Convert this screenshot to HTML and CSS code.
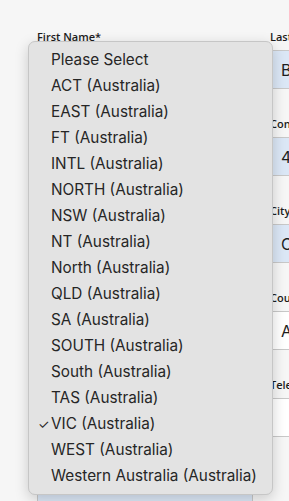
FILE: index.html
```html
<!DOCTYPE html>
<html lang="en">
<head>
    <meta charset="UTF-8">
    <meta name="viewport" content="width=device-width, initial-scale=1.0">
    <title>Contact Details</title>
    <link rel="stylesheet" href="styles.css">
</head>
<body>
    <form class="details-form">
        <div class="field">
            <label>First Name*</label>
            <div class="input filled">Ben</div>
        </div>
        <div class="field">
            <label>Last Name*</label>
            <div class="input filled">Bennett</div>
        </div>
        <div class="field">
            <label>Email*</label>
            <div class="input filled">ben@example.com</div>
        </div>
        <div class="field">
            <label>Contact Number*</label>
            <div class="input filled">412 345 678</div>
        </div>
        <div class="field">
            <label>Address*</label>
            <div class="input filled">1 Collins St</div>
        </div>
        <div class="field">
            <label>City*</label>
            <div class="input filled">Carlton</div>
        </div>
        <div class="field">
            <label>Postcode*</label>
            <div class="input filled">3053</div>
        </div>
        <div class="field">
            <label>Country*</label>
            <div class="input">Australia</div>
        </div>
        <div class="field">
            <label>Company</label>
            <div class="input"></div>
        </div>
        <div class="field">
            <label>Telephone</label>
            <div class="input"></div>
        </div>
        <div class="field state-field">
            <label>State*</label>
            <div class="input filled">VIC (Australia)</div>
        </div>
    </form>

    <ul class="select-menu">
        <li>Please Select</li>
        <li>ACT (Australia)</li>
        <li>EAST (Australia)</li>
        <li>FT (Australia)</li>
        <li>INTL (Australia)</li>
        <li>NORTH (Australia)</li>
        <li>NSW (Australia)</li>
        <li>NT (Australia)</li>
        <li>North (Australia)</li>
        <li>QLD (Australia)</li>
        <li>SA (Australia)</li>
        <li>SOUTH (Australia)</li>
        <li>South (Australia)</li>
        <li>TAS (Australia)</li>
        <li class="checked">VIC (Australia)</li>
        <li>WEST (Australia)</li>
        <li>Western Australia (Australia)</li>
    </ul>
</body>
</html>
```

FILE: styles.css
```css
body, html {
    margin: 0;
    padding: 0;
    height: 100%;
    overflow: hidden;
    background: #f6f6f6;
    font-family: 'Inter', 'Noto Sans', sans-serif;
}
.details-form {
    display: grid;
    grid-template-columns: 216px 216px;
    column-gap: 17px;
    padding: 30px 0 0 37px;
}
.field {
    display: flex;
    flex-direction: column;
    height: 87px;
}
.field label {
    font-family: 'Open Sans', sans-serif;
    font-size: 11px;
    font-weight: 600;
    color: #1c1c1c;
    line-height: 14px;
    height: 20px;
    white-space: nowrap;
}
.state-field label {
    height: 28px;
}
.input {
    box-sizing: border-box;
    height: 39px;
    padding: 0 10px;
    display: flex;
    align-items: center;
    font-size: 16px;
    color: #1e1e1e;
    background: #fff;
    border: 1px solid #c8c8c8;
    white-space: nowrap;
    overflow: hidden;
}
.input.filled {
    background: #dbe7f6;
}
.select-menu {
    position: absolute;
    left: 28px;
    top: 41px;
    width: 245px;
    box-sizing: border-box;
    margin: 0;
    padding: 5px 0;
    list-style: none;
    background: #e3e3e3;
    border: 1px solid #c6c6c6;
    border-radius: 7px;
    box-shadow: 0 4px 14px rgba(0, 0, 0, 0.18);
}
.select-menu li {
    height: 26px;
    line-height: 26px;
    padding-left: 22px;
    font-size: 15.3px;
    color: #262626;
    white-space: nowrap;
    position: relative;
}
.select-menu li.checked::before {
    content: "\2713";
    position: absolute;
    left: 9px;
    font-size: 13px;
}
```
